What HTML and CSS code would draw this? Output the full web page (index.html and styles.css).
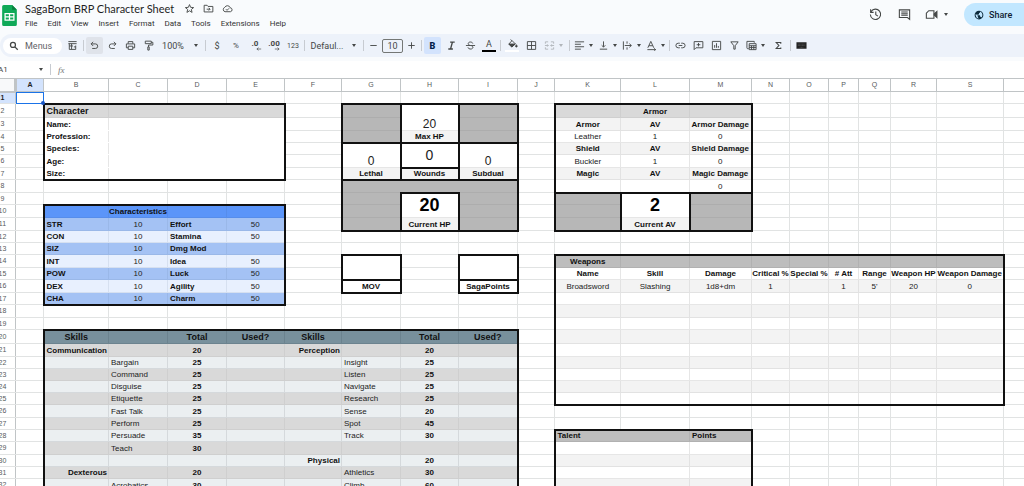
FILE: index.html
```html
<!DOCTYPE html>
<html lang="en">
<head>
<meta charset="utf-8">
<title>SagaBorn BRP Character Sheet</title>
<link rel="stylesheet" href="styles.css">
</head>
<body>
<header class="top">
  <svg class="logo" viewBox="0 0 14 20"><path fill="#0fa958" d="M1.500 0H9.500L14 4.500V18.500A1.500 1.500 0 0 1 12.500 20H1.500A1.500 1.500 0 0 1 0 18.500V1.500A1.500 1.500 0 0 1 1.500 0Z"/><path fill="#087f3e" d="M9.500 0L14 4.500H9.500Z"/><path fill="none" stroke="#fff" stroke-width="1.200" d="M2.800 8.300H11.200V14.300H2.800ZM2.800 11.300H11.200M7 8.300V14.300"/></svg>
  <div class="heading">
    <div class="title-row">
      <h1 class="title">SagaBorn BRP Character Sheet</h1>
      <button class="mini" aria-label="Star"><svg viewBox="0 0 24 24"><path d="M12 3.500l2.500 6 6.500.5-5 4.200 1.600 6.300L12 17l-5.600 3.500L8 14.200 3 10l6.500-.5Z"/></svg></button>
      <button class="mini" aria-label="Move"><svg viewBox="0 0 24 24"><path d="M2.500 5H9l2 2.500H21.500V19.500H2.500ZM8 13.500H15M12.500 10.500L15.500 13.500L12.500 16.500"/></svg></button>
      <button class="mini" aria-label="Saved"><svg viewBox="0 0 24 24"><path d="M6.500 19A5 5 0 0 1 6 9.500A6.500 6.500 0 0 1 18 10.500A4.300 4.300 0 0 1 18.500 19ZM8.500 13.500L11 16L15.500 11.500"/></svg></button>
    </div>
    <nav class="menus">
      <button>File</button><button>Edit</button><button>View</button><button>Insert</button><button>Format</button><button>Data</button><button>Tools</button><button>Extensions</button><button>Help</button>
    </nav>
  </div>
  <div class="actions">
    <button class="action" aria-label="History"><svg viewBox="0 0 24 24"><path d="M4 6.500A9.500 9.500 0 1 1 2.500 12M3 2.500V8H8.500M12.500 6.500V12.500L16.500 15"/></svg></button>
    <button class="action" aria-label="Comments"><svg viewBox="0 0 24 24"><path d="M2.500 3.500H21.500V21L17.500 17.500H2.500ZM6 7.500H18M6 10.500H18M6 13.500H18"/></svg></button>
    <button class="action meet" aria-label="Meet"><svg viewBox="0 0 24 24"><path d="M7 5H16.500V19H2.500V9.500Z"/><path class="solid" d="M17 11L22 6.500V17.500L17 13Z"/></svg><span class="caret"></span></button>
    <button class="share"><svg viewBox="0 0 24 24"><circle class="solid" cx="12" cy="12" r="10.500"/><path class="land" d="M4 9L9 14V17L11.500 20.500C7 20.500 3 16 4 9ZM14.500 3.500V6L12 8V10.500H8V12.500H14L15.500 16.500L18.500 17.500C21.500 13 21 7 14.500 3.500Z"/></svg>Share</button>
  </div>
</header>

<div class="toolbar" role="toolbar">
  <button class="search"><svg viewBox="0 0 24 24"><circle cx="9.500" cy="9.500" r="6"/><path d="M14 14L21 21"/></svg>Menus</button>
  <button class="tool w18" aria-label="Side panel"><svg viewBox="0 0 24 24"><path d="M3 3.500H21M3 8H21M5 8V20.500H19V12M5 13H13M10 8V20M15 15H19"/></svg></button>
  <span class="sep"></span>
  <button class="tool pressed" aria-label="Undo"><svg viewBox="0 0 24 24"><path d="M9 4L4.500 8.500L9 13M5 8.500H14A5 5 0 0 1 14 18.500H7"/></svg></button>
  <button class="tool" aria-label="Redo"><svg viewBox="0 0 24 24"><path d="M15 4L19.500 8.500L15 13M19 8.500H10A5 5 0 0 0 10 18.500H17"/></svg></button>
  <button class="tool" aria-label="Print"><svg viewBox="0 0 24 24"><path d="M7 8V3.500H17V8M7 17H3V8.500H21V17H17M7 13.500H17V20.500H7Z"/></svg></button>
  <button class="tool" aria-label="Paint format"><svg viewBox="0 0 24 24"><path d="M5 2.500H18V8H5ZM18 5H21.500V11H12V15M10.500 15H13.500V22H10.500Z"/></svg></button>
  <button class="tool zoom">100%<span class="caret"></span></button>
  <span class="sep"></span>
  <button class="tool w18">$</button>
  <button class="tool w18 small">%</button>
  <button class="tool w18 dec" aria-label="Decrease decimals">.0<svg viewBox="0 0 8 6"><path d="M8 3H2M4 1L1.500 3L4 5"/></svg></button>
  <button class="tool w18 dec" aria-label="Increase decimals">.00<svg viewBox="0 0 8 6"><path d="M0 3H6M4 1L6.500 3L4 5"/></svg></button>
  <button class="tool w18 tiny">123</button>
  <span class="sep"></span>
  <button class="tool family">Defaul...<span class="caret"></span></button>
  <span class="sep"></span>
  <button class="tool w15" aria-label="Smaller"><svg viewBox="0 0 24 24"><path d="M5 12H19"/></svg></button>
  <input class="size" aria-label="Font size" value="10">
  <button class="tool w15" aria-label="Larger"><svg viewBox="0 0 24 24"><path d="M5 12H19M12 5V19"/></svg></button>
  <span class="sep"></span>
  <button class="tool bold">B</button>
  <button class="tool w18" aria-label="Italic"><svg viewBox="0 0 24 24"><path class="heavy" d="M9 4.500H19M5 19.500H15M14 4.500L10 19.500"/></svg></button>
  <button class="tool w18" aria-label="Strikethrough"><svg viewBox="0 0 24 24"><path d="M2 12H22M17 7.500C16 3.500 7 3 7 8C7 10 9 11 11 12M14 12.500C17 14 18 15.500 17 17.500C15 21 7 20.500 6.500 16"/></svg></button>
  <button class="tool w18 ink">A</button>
  <span class="sep"></span>
  <button class="tool w18 fill" aria-label="Fill colour"><svg viewBox="0 0 24 24"><path d="M8 1L10.500 4"/><path d="M11 3.500L18 10.500L10.500 17.500L4 11Z"/><path class="solid" d="M4 11H18L10.500 17.500ZM20.500 12.500C23 16 22.500 17.500 20.500 17.500S18 16 20.500 12.500Z"/></svg></button>
  <button class="tool w18" aria-label="Borders"><svg viewBox="0 0 24 24"><path d="M3 3.500H21V20.500H3ZM3 12H21M12 3.500V20.500"/></svg></button>
  <button class="tool merge off" aria-label="Merge"><svg viewBox="0 0 24 24"><path d="M9 4H3V8M15 4H21V8M9 20H3V16M15 20H21V16M2 12H9M22 12H15M7 9.500L9.500 12L7 14.500M17 9.500L14.500 12L17 14.500"/></svg><span class="caret"></span></button>
  <span class="sep"></span>
  <button class="tool combo" aria-label="Align"><svg viewBox="0 0 24 24"><path d="M2 4H22M2 9.300H15M2 14.700H22M2 20H15"/></svg><span class="caret"></span></button>
  <button class="tool combo" aria-label="Vertical align"><svg viewBox="0 0 24 24"><path d="M4 20H20M12 3V15M8 11.500L12 15.500L16 11.500"/></svg><span class="caret"></span></button>
  <button class="tool combo" aria-label="Wrap"><svg viewBox="0 0 24 24"><path d="M3 3V21M11 3V8M11 16V21M6 12H20M16 8L20.500 12L16 16"/></svg><span class="caret"></span></button>
  <button class="tool combo" aria-label="Rotate"><svg viewBox="0 0 24 24"><path d="M4 17L10.500 3L17 17M6.500 12.500H14.500M3 21H21M18 18L21 21L18 23"/></svg><span class="caret"></span></button>
  <span class="sep"></span>
  <button class="tool" aria-label="Link"><svg viewBox="0 0 24 24"><path d="M10.500 7H7A5 5 0 0 0 7 17H10.500M13.500 7H17A5 5 0 0 1 17 17H13.500M8 12H16"/></svg></button>
  <button class="tool" aria-label="Comment"><svg viewBox="0 0 24 24"><path d="M2.500 3.500H21.500V17H6.500L2.500 21ZM12 6.500V14M8 10.300H16"/></svg></button>
  <button class="tool" aria-label="Chart"><svg viewBox="0 0 24 24"><path d="M3 3H21V21H3ZM8 11V17M12 7V17M16 13V17"/></svg></button>
  <button class="tool" aria-label="Filter"><svg viewBox="0 0 24 24"><path d="M4 4H20L13.500 12.500V20H10.500V12.500Z"/></svg></button>
  <button class="tool combo" aria-label="Filter views"><svg viewBox="0 0 24 24"><path d="M6 19H4A2 2 0 0 1 2 17V3H18V6M7 8H22V21H7ZM7 12.500H22M7 16.500H22M12 12.500V21M17 12.500V21"/></svg><span class="caret"></span></button>
  <button class="tool w20" aria-label="Functions"><svg class="sigma" viewBox="0 0 24 24"><path class="heavy" d="M18 7V4H6L13 12L6 20H18V17"/></svg></button>
  <span class="sep"></span>
  <button class="tool" aria-label="Input tools"><svg viewBox="0 0 24 24"><path class="key" d="M1 5H23V19H1Z"/><path class="keys" d="M4 9H20M4 12H20M8 16H16"/></svg></button>
</div>

<div class="formula">
  <input class="name-box" aria-label="Cell" value="A1">
  <span class="caret"></span>
  <span class="sep"></span>
  <label class="fx" for="formula">fx</label>
  <input class="formula-text" id="formula">
</div>

<main class="grid"><table class="sheet" id="sheet"></table></main>
<script src="sheet.js"></script>
</body>
</html>
```
FILE: styles.css
```css
* { box-sizing: border-box; }
body {
  margin: 0;
  height: 100vh;
  overflow: hidden;
  display: flex;
  flex-direction: column;
  background: #f9fbfd;
  color: #444746;
  font-family: Roboto, "Liberation Sans", sans-serif;
}
button, input { font: inherit; color: inherit; border: 0; padding: 0; margin: 0; background: none; }
svg { fill: none; stroke: #444746; stroke-width: 2; flex: none; }
.solid { fill: #444746; }
.heavy { stroke-width: 3; }
.caret { border: 2px solid transparent; border-top: 3px solid #444746; border-bottom: 0; margin: 0 1px; flex: none; }
.sep { width: 3px; height: 11px; flex: none; border-left: 1px solid #c7cbd1; margin-left: 1px; margin-right: -1px; }

/* header */
.top { display: flex; height: 34px; padding-left: 2px; flex: none; overflow: hidden; }
.logo { width: 15px; height: 21px; margin-top: 5px; stroke: none; }
.heading { padding: 2px 0 0 8px; }
.title-row { display: flex; align-items: center; height: 14px; }
.title { margin: 0 6px 0 0; font: 400 11px/14px Lato, Roboto, sans-serif; color: #1f1f1f; white-space: nowrap; }
.mini { width: 19px; height: 12px; display: flex; justify-content: center; }
.mini svg { width: 11px; height: 11px; }
.menus { display: flex; gap: 10px; padding-top: 2px; font-size: 8px; line-height: 11px; color: #333; }
.actions { margin-left: auto; display: flex; padding-top: 3px; }
.action { width: 29px; height: 22px; display: flex; align-items: center; justify-content: center; }
.action svg { width: 13px; height: 13px; }
.meet { width: 36px; gap: 5px; margin-right: 9px; }
.share { display: flex; align-items: center; gap: 5px; height: 23px; width: 60px; padding-left: 10px; border-radius: 12px 0 0 12px; background: #c2e7ff; color: #123; font-size: 9px; font-weight: 500; }
.share svg { width: 10px; height: 10px; stroke: none; }
.share .solid { fill: #0b2a3c; }
.land { fill: #c2e7ff; }

/* toolbar */
.toolbar { display: flex; align-items: center; gap: 1px; height: 23px; padding-left: 3px; margin-bottom: 4px; border-radius: 12px 0 0 12px; background: #edf2fa; flex: none; overflow: hidden; }
.search { display: flex; align-items: center; gap: 6px; width: 59px; height: 16px; padding-left: 6px; border-radius: 8px; background: #fff; font-size: 9px; color: #5f6368; }
.search svg { width: 10px; height: 10px; stroke-width: 3; }
.tool { width: 17px; height: 17px; flex: none; display: flex; align-items: center; justify-content: center; border-radius: 2px; font-size: 9px; }
.tool svg { width: 11px; height: 11px; }
.w15 { width: 15px; }
.w18 { width: 18px; }
.w20 { width: 20px; }
.small { font-size: 8px; }
.tiny { font-size: 7px; }
.pressed { background: #dfe3ea; }
.zoom { width: 45px; gap: 9px; }
.dec { flex-direction: column; line-height: 7px; font-size: 8px; font-weight: 700; }
.tool.dec svg { width: 7px; height: 4px; align-self: flex-end; margin-right: 2px; stroke-width: 1; }
.family { width: 54px; gap: 8px; }
.size { width: 21px; height: 14px; border: 1px solid #747775; border-radius: 2px; text-align: center; font-size: 9px; }
.bold { background: #d3e3fd; color: #041e49; font-weight: 900; }
.ink { position: relative; line-height: 10px; padding-bottom: 3px; }
.ink::after { content: ""; position: absolute; left: 2px; right: 2px; bottom: 2px; height: 2px; background: #000; }
.fill { position: relative; padding-bottom: 3px; }
.fill::after { content: ""; position: absolute; left: 2px; right: 2px; bottom: 2px; height: 2px; background: #fff; }
.merge { width: 26px; gap: 3px; }
.combo { width: 23px; gap: 3px; }
.off { opacity: .35; }
.tool .sigma { width: 9px; }
.key { fill: #222; stroke: none; }
.keys { stroke: #777; stroke-width: 1; stroke-dasharray: 2 1; }

/* formula bar */
.formula { display: flex; align-items: center; height: 17px; background: #fff; flex: none; }
.name-box { width: 40px; margin-left: -2px; font-size: 8px; }
.formula .sep { margin-left: 6px; margin-right: 5px; }
.fx { font: italic 9px "Liberation Serif", serif; color: #777; }
.formula-text { flex: 1; font-size: 8px; }

/* grid */
.grid { flex: 1; min-height: 0; overflow: hidden; background: #fff; }
.sheet { width: calc(100% + 16px); margin-left: -11px; table-layout: fixed; border-collapse: collapse; font: 8px/10px "Liberation Sans", Arial, sans-serif; color: #222; }
.sheet th, .sheet td { padding: 0; border: 1px solid #e1e3e3; white-space: nowrap; text-align: center; vertical-align: bottom; }
.sheet thead th { height: 13px; vertical-align: middle; border-color: #c0c4c6; color: #575a5c; font-size: 7px; font-weight: 400; }
.sheet tbody th { font-weight: 400; font-size: 7px; color: #575a5c; vertical-align: middle; border-right-color: #c0c4c6; }
.sheet thead .active, .sheet tbody .active { background: #d3e3fd; color: #1f1f1f; font-weight: 700; }
.sheet thead .corner { background: #f8f9fa; border-right: 3px solid #c0c4c6; border-bottom: 2px solid #c0c4c6; }
.h12 { height: 12px; }
.h13 { height: 13px; }
.h14 { height: 14px; }
.row-head { width: 26px; }
.sheet .left { text-align: left; padding-left: 2px; }
.sheet .right { text-align: right; padding-right: 1px; }
.strong { font-weight: 700; color: #111; }
.head { font-size: 9px; font-weight: 700; color: #111; }
.sheet .mid { vertical-align: middle; }
.num { font-size: 12px; line-height: 12px; }
.num-l { font-size: 14px; line-height: 14px; }
.num-xl { font-size: 18px; line-height: 18px; font-weight: 700; color: #000; }
.sheet .plain { border-color: #e6e6e6; background: #fff; }
.sheet .blank { border-top-color: #fff; border-bottom-color: #fff; }
.sheet .light { background: #f3f3f3; border-color: #e2e2e2; }
.sheet .silver { background: #d9d9d9; border-color: #cfcfcf; }
.sheet .gray { background: #b7b7b7; border-color: #adadad; }
.sheet .ash { background: #bdbdbd; border-color: #b1b1b1; }
.sheet .blue { background: #5b95f9; border-color: #568deb; }
.sheet .sky { background: #a4c2f4; border-color: #9ab8e8; }
.sheet .ice { background: #e8f0fe; border-color: #d6e0f0; }
.sheet .slate { background: #78909c; border-color: #6c838f; }
.sheet .mist { background: #ebeff1; border-color: #d5d9dc; }
.sheet .bt { border-top: 2px solid #111; }
.sheet .bb { border-bottom: 2px solid #111; }
.sheet .bl { border-left: 2px solid #111; }
.sheet .br { border-right: 2px solid #111; }
.sheet .cursor { position: relative; outline: 1px solid #1a73e8; outline-offset: -1px; }
.cursor::after { content: ""; position: absolute; right: -2px; bottom: -2px; width: 4px; height: 4px; border-radius: 50%; background: #1a56c4; z-index: 1; }
```
FILE: sheet.js
```js
const letters = "ABCDEFGHIJKLMNOPQRST";
const widths = [28, 65, 59, 59, 58, 57, 59, 58, 59, 37, 66, 69, 62, 38, 39, 30, 32, 46, 67];
const heights = [12, 14, 13, 12, 12, 13, 12, 13, 12, 13, 13, 12, 12, 13, 12, 13, 12, 13, 12, 14, 13, 12, 12, 12, 12, 13, 12, 12, 13, 12, 12, 13, 12];
const rows = heights.length;
const cells = {};

const at = (c, r) => (cells[letters[c] + r] ??= { text: "", cls: new Set(), cols: 1, rows: 1 });
function parse(range) {
  const [a, b = a] = range.split(":");
  return [letters.indexOf(a[0]), +a.slice(1), letters.indexOf(b[0]), +b.slice(1)];
}
function each(range, fn) {
  const [c1, r1, c2, r2] = parse(range);
  for (let r = r1; r <= r2; r++) for (let c = c1; c <= c2; c++) fn(at(c, r), c, r);
}
const style = (range, cls) => each(range, cell => cls.split(" ").forEach(k => cell.cls.add(k)));
function box(range) {
  const [c1, r1, c2, r2] = parse(range);
  each(range, (cell, c, r) => {
    if (c === c1) cell.cls.add("bl");
    if (c === c2) cell.cls.add("br");
    if (r === r1) cell.cls.add("bt");
    if (r === r2) cell.cls.add("bb");
  });
}
function merge(range) {
  const [c1, r1, c2, r2] = parse(range);
  const first = at(c1, r1);
  each(range, cell => {
    if (cell === first) return;
    cell.cls.forEach(k => first.cls.add(k));
    cell.hidden = true;
  });
  first.cols = c2 - c1 + 1;
  first.rows = r2 - r1 + 1;
}
function put(ref, text, cls) {
  const [c, r] = parse(ref);
  at(c, r).text = text;
  if (cls) style(ref, cls);
}
function column(letter, start, values, cls) {
  values.forEach((v, i) => { if (v !== "") put(letter + (start + i), v, cls); });
}
function row(start, r, values, cls) {
  const first = letters.indexOf(start);
  values.forEach((v, i) => { if (v !== "") put(letters[first + i] + r, v, cls); });
}

style("A1", "cursor");

// Character
style("B2:E2", "silver");
style("B3:E7", "plain blank");
box("B2:E7");
for (let r = 2; r <= 7; r++) merge(`C${r}:E${r}`);
put("B2", "Character", "head left mid");
column("B", 3, ["Name:", "Profession:", "Species:", "Age:", "Size:"], "strong left");

// Characteristics
style("B10:E10", "blue");
for (let r = 11; r <= 17; r++) style(`B${r}:E${r}`, r % 2 ? "sky" : "ice");
box("B10:E17");
put("C10", "Characteristics", "strong");
column("B", 11, ["STR", "CON", "SIZ", "INT", "POW", "DEX", "CHA"], "strong left");
column("C", 11, [10, 10, 10, 10, 10, 10, 10]);
column("D", 11, ["Effort", "Stamina", "Dmg Mod", "Idea", "Luck", "Agility", "Charm"], "strong left");
column("E", 11, [50, 50, "", 50, 50, 50, 50]);

// Hit points
["G2:G4", "I2:I4", "G8:I11"].forEach(r => style(r, "gray"));
["H2:H4", "G5:I7", "H9:H11", "G14:G16", "I14:I16"].forEach(r => each(r, c => { c.cls.delete("gray"); c.cls.add("plain"); }));
["G2:G4", "H2:H4", "I2:I4", "G5:G7", "H5:H6", "H7", "I5:I7", "G8:I11", "H9:H11", "G14:G15", "G16", "I14:I15", "I16"].forEach(box);
["H4", "G7:I7", "H11"].forEach(r => each(r, c => { c.cls.delete("plain"); c.cls.add("light"); }));
["H2:H3", "G5:G6", "H5:H6", "I5:I6", "G8:I8", "H9:H10", "G14:G15", "I14:I15"].forEach(merge);
put("H2", 20, "num");
put("H4", "Max HP", "strong");
put("G5", 0, "num");
put("H5", 0, "num-l mid");
put("I5", 0, "num");
row("G", 7, ["Lethal", "Wounds", "Subdual"], "strong");
put("H9", 20, "num-xl mid");
put("H11", "Current HP", "strong");
put("G16", "MOV", "strong");
put("I16", "SagaPoints", "strong");

// Armor
style("K2:M2", "silver");
for (let r = 3; r <= 8; r++) style(`K${r}:M${r}`, r % 2 ? "light" : "plain");
["K9:K11", "M9:M11"].forEach(r => style(r, "gray"));
style("L9:L10", "plain");
style("L11", "light");
["K2:M8", "K9:K11", "L9:L11", "M9:M11"].forEach(box);
merge("L9:L10");
put("L2", "Armor", "strong");
["Armor", "Shield", "Magic"].forEach((name, i) => row("K", 3 + i * 2, [name, "AV", name + " Damage"], "strong"));
row("K", 4, ["Leather", 1, 0]);
row("K", 6, ["Buckler", 1, 0]);
put("M8", 0);
put("L9", 2, "num-xl mid");
put("L11", "Current AV", "strong");

// Weapons
style("K14:S14", "ash");
for (let r = 15; r <= 25; r++) style(`K${r}:S${r}`, r % 2 ? "plain" : "light");
box("K14:S25");
put("K14", "Weapons", "strong");
row("K", 15, ["Name", "Skill", "Damage", "Critical %", "Special %", "# Att", "Range", "Weapon HP", "Weapon Damage"], "strong");
row("K", 16, ["Broadsword", "Slashing", "1d8+dm", 1, "", 1, "5'", 20, 0]);

// Talents
style("K28:M28", "ash");
for (let r = 29; r <= 33; r++) style(`K${r}:M${r}`, r % 2 ? "plain" : "light");
box("K28:M33");
for (let r = 28; r <= 33; r++) merge(`K${r}:L${r}`);
put("K28", "Talent", "strong left");
put("M28", "Points", "strong left");

// Skills
style("B20:I20", "slate");
for (let r = 21; r <= 33; r++) style(`B${r}:I${r}`, r % 2 ? "silver" : "mist");
box("B20:I33");
row("B", 20, ["Skills", "", "Total", "Used?", "Skills", "", "Total", "Used?"], "head mid");
put("B21", "Communication", "strong right");
put("B31", "Dexterous", "strong right");
column("C", 22, ["Bargain", "Command", "Disguise", "Etiquette", "Fast Talk", "Perform", "Persuade", "Teach", "", "", "Acrobatics"], "left");
column("D", 21, [20, 25, 25, 25, 25, 25, 25, 35, 30, "", 20, 30], "strong");
put("F21", "Perception", "strong right");
put("F30", "Physical", "strong right");
column("G", 22, ["Insight", "Listen", "Navigate", "Research", "Sense", "Spot", "Track", "", "", "Athletics", "Climb"], "left");
column("H", 21, [20, 25, 25, 25, 25, 20, 45, 30, "", 20, 30, 60], "strong");

let html = `<colgroup><col class="row-head">${widths.map(w => `<col style="width:${w}px">`).join("")}<col></colgroup>`;
html += `<thead><tr><th class="corner"></th>${[...letters].map((l, i) => `<th scope="col"${i ? "" : ' class="active"'}>${l === "T" ? "" : l}</th>`).join("")}</tr></thead><tbody>`;
for (let r = 1; r <= rows; r++) {
  html += `<tr class="h${heights[r - 1]}"><th scope="row"${r === 1 ? ' class="active"' : ""}>${r}</th>`;
  for (let c = 0; c < letters.length; c++) {
    const cell = at(c, r);
    if (cell.hidden) continue;
    const span = (cell.cols > 1 ? ` colspan="${cell.cols}"` : "") + (cell.rows > 1 ? ` rowspan="${cell.rows}"` : "");
    html += `<td class="${[...cell.cls].join(" ")}"${span}>${cell.text}</td>`;
  }
  html += "</tr>";
}
document.getElementById("sheet").innerHTML = html + "</tbody>";
```
